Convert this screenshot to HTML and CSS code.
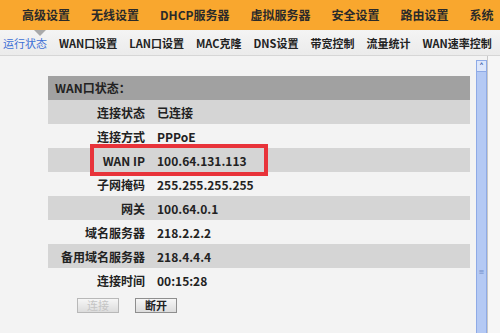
FILE: index.html
```html
<!DOCTYPE html>
<html lang="zh-CN">
<head>
<meta charset="utf-8">
<link rel="stylesheet" href="styles.css">
</head>
<body>
<div class="topnav">
  <span class="tn">高级设置</span>
  <span class="tn">无线设置</span>
  <span class="tn">DHCP服务器</span>
  <span class="tn">虚拟服务器</span>
  <span class="tn">安全设置</span>
  <span class="tn">路由设置</span>
  <span class="tn">系统</span>
</div>
<div class="subnav">
  <span class="sn active">运行状态</span>
  <span class="sn">WAN口设置</span>
  <span class="sn">LAN口设置</span>
  <span class="sn">MAC克隆</span>
  <span class="sn">DNS设置</span>
  <span class="sn">带宽控制</span>
  <span class="sn">流量统计</span>
  <span class="sn">WAN速率控制</span>
</div>
<div class="main">
  <div class="content">
    <div class="panel">
      <div class="phead">WAN口状态：</div>
      <div class="row alt"><span class="lbl">连接状态</span><span class="val">已连接</span></div>
      <div class="row"><span class="lbl">连接方式</span><span class="val">PPPoE</span></div>
      <div class="row alt"><span class="lbl">WAN IP</span><span class="val">100.64.131.113</span><span class="mark"></span></div>
      <div class="row"><span class="lbl">子网掩码</span><span class="val">255.255.255.255</span></div>
      <div class="row alt"><span class="lbl">网关</span><span class="val">100.64.0.1</span></div>
      <div class="row"><span class="lbl">域名服务器</span><span class="val">218.2.2.2</span></div>
      <div class="row alt"><span class="lbl">备用域名服务器</span><span class="val">218.4.4.4</span></div>
      <div class="row"><span class="lbl">连接时间</span><span class="val">00:15:28</span></div>
      <div class="btns">
        <button class="btn" disabled>连接</button>
        <button class="btn">断开</button>
      </div>
    </div>
  </div>
  <div class="side">
    <div class="side-up">&#708;</div>
    <div class="side-knob">&#8801;</div>
  </div>
  <div class="edge">&nbsp;</div>
</div>
</body>
</html>
```

FILE: styles.css
```css
* { box-sizing: border-box; }
html, body { margin: 0; padding: 0; }
body {
  width: 500px;
  height: 333px;
  overflow: hidden;
  background: #f3f3f3;
  font-family: "Noto Sans CJK SC", "Noto Sans", sans-serif;
  color: #222;
}
.topnav {
  height: 30px;
  background: #f9a72e;
  display: flex;
  align-items: center;
  padding-left: 22px;
  gap: 21px;
  white-space: nowrap;
  overflow: hidden;
}
.tn {
  flex-shrink: 0;
  font-size: 12px;
  font-weight: 700;
  color: #2a2a2a;
  line-height: 30px;
}
.subnav {
  position: relative;
  height: 26px;
  background: linear-gradient(#f4f4f4, #ebebeb);
  border-bottom: 1px solid #d6d6d6;
  display: flex;
  align-items: center;
  padding-left: 3px;
  gap: 12px;
  white-space: nowrap;
  overflow: hidden;
}
.subnav::before {
  content: "";
  position: absolute;
  left: 34px;
  top: 0;
  border-left: 6px solid transparent;
  border-right: 6px solid transparent;
  border-top: 6px solid #a9a9a9;
}
.sn {
  flex-shrink: 0;
  font-size: 11px;
  font-weight: 700;
  color: #222;
}
.sn.active {
  color: #3d6fd6;
  font-weight: 400;
}
.main {
  display: grid;
  grid-template-columns: 476px 11px 13px;
  height: 277px;
}
.content {
  padding: 20px 6px 0 48px;
  background: #f3f3f3;
}
.phead {
  height: 24px;
  background: #a1a1a1;
  font-size: 12px;
  font-weight: 700;
  color: #222;
  line-height: 24px;
  padding-left: 7px;
}
.row {
  position: relative;
  height: 24px;
  display: flex;
  align-items: center;
  font-size: 12px;
  font-weight: 700;
  color: #222;
}
.row.alt { background: #d5d5d5; }
.lbl {
  width: 97px;
  text-align: right;
}
.val {
  padding-left: 12px;
}
.mark {
  position: absolute;
  left: 42px;
  top: -4px;
  width: 178px;
  height: 32px;
  border: 4px solid #e8333a;
}
.btns {
  display: flex;
  gap: 16px;
  padding: 6px 0 0 29px;
}
.btn {
  width: 42px;
  height: 15px;
  padding: 0;
  font-family: inherit;
  font-size: 11px;
  font-weight: 700;
  line-height: 13px;
  color: #222;
  background: linear-gradient(#f6f6f6, #dcdcdc);
  border: 1px solid #8e8e8e;
  border-radius: 0;
}
.btn:disabled {
  color: #c4c4c4;
  font-weight: 400;
  border-color: #b8b8b8;
}
.side {
  display: grid;
  grid-template-rows: 4px 12px 1fr;
  font-family: "DejaVu Sans", sans-serif;
}
.side-up {
  grid-row: 2;
  background: #dde7fb;
  border: 1px solid #8eaae6;
  font-size: 10px;
  line-height: 14px;
  text-align: center;
  color: #2f55a4;
  overflow: hidden;
}
.side-knob {
  grid-row: 3;
  background: #b4c9f4;
  border-left: 1px solid #8eaae6;
  border-right: 1px solid #8eaae6;
  font-size: 7px;
  color: #6f8cc8;
  text-align: center;
  padding-top: 196px;
  overflow: hidden;
}
.edge {
  background: #f6f6f6;
  border-left: 1px solid #c8c8c8;
}
```
